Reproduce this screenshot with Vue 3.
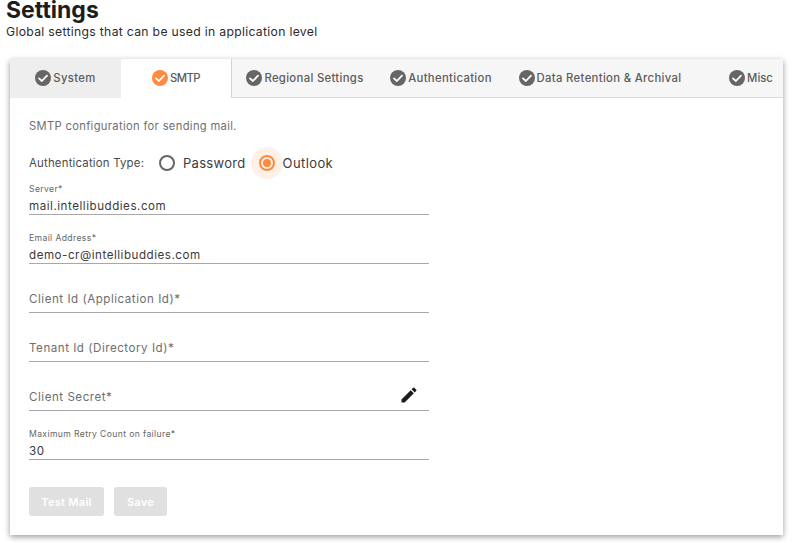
<script setup>
const tabs = [
  { label: 'System', cls: 't-system' },
  { label: 'SMTP', cls: 't-smtp', active: true },
  { label: 'Regional Settings', cls: 't-regional' },
  { label: 'Authentication', cls: 't-auth' },
  { label: 'Data Retention & Archival', cls: 't-data' },
  { label: 'Misc', cls: 't-misc' }
]
const fields = [
  { label: 'Server*', value: 'mail.intellibuddies.com' },
  { label: 'Email Address*', value: 'demo-cr@intellibuddies.com' },
  { label: 'Client Id (Application Id)*' },
  { label: 'Tenant Id (Directory Id)*' },
  { label: 'Client Secret*', edit: true },
  { label: 'Maximum Retry Count on failure*', value: '30' }
]
</script>

<template>
  <div class="page">
    <header class="head">
      <h1>Settings</h1>
      <p>Global settings that can be used in application level</p>
    </header>
    <section class="card">
      <nav class="tabs">
        <div v-for="t in tabs" :key="t.label" class="tab" :class="[t.cls, { active: t.active }]">
          <svg class="check" viewBox="0 0 16 16" width="16" height="16">
            <circle cx="8" cy="8" r="8" class="disc" />
            <path d="M4 8.4 L6.9 11 L12 5.6" fill="none" stroke="#fff" stroke-width="1.8" stroke-linecap="round" stroke-linejoin="round" />
          </svg>
          <span>{{ t.label }}</span>
        </div>
      </nav>
      <div class="body">
        <p class="intro">SMTP configuration for sending mail.</p>
        <div class="auth">
          <span class="auth-label">Authentication Type:</span>
          <label class="radio">
            <span class="ring"></span>
            <span>Password</span>
          </label>
          <label class="radio on">
            <span class="halo"><span class="ring"><span class="dot"></span></span></span>
            <span>Outlook</span>
          </label>
        </div>
        <div class="fields">
          <div v-for="f in fields" :key="f.label" class="field">
            <template v-if="f.value">
              <span class="small">{{ f.label }}</span>
              <span class="value">{{ f.value }}</span>
            </template>
            <div v-else class="empty">
              <span>{{ f.label }}</span>
              <svg v-if="f.edit" class="pen" viewBox="0 0 24 24" width="20" height="20">
                <path fill="#1c1c1c" d="M3 17.25V21h3.75L17.81 9.94l-3.75-3.75L3 17.25zM20.71 7.04a1 1 0 0 0 0-1.41l-2.34-2.34a1 1 0 0 0-1.41 0l-1.83 1.83 3.75 3.75 1.83-1.83z" />
              </svg>
            </div>
          </div>
        </div>
        <div class="actions">
          <button class="btn test" disabled>Test Mail</button>
          <button class="btn save" disabled>Save</button>
        </div>
      </div>
    </section>
  </div>
</template>

<style>
html, body { margin: 0; background: #fff; }
</style>

<style scoped>
.page {
  width: 792px;
  height: 543px;
  overflow: hidden;
  font-family: "Inter", "Open Sans", sans-serif;
  color: #212121;
}
.head { padding: 1px 0 0 6px; height: 59px; box-sizing: border-box; }
h1 {
  margin: 0;
  font-size: 23px;
  line-height: 18px;
  font-weight: 700;
  color: #1d1d1d;
}
.head p {
  margin: 5px 0 0;
  font-size: 12.2px;
  line-height: 16px;
  letter-spacing: .31px;
  color: #2b2b2b;
}
.card {
  margin-left: 10px;
  width: 773px;
  height: 476px;
  background: #fff;
  box-shadow: 0 2px 6px rgba(0, 0, 0, .4);
}
.tabs {
  display: flex;
  height: 38px;
  background: #f6f6f6;
  border-bottom: 1px solid #dcdcdc;
}
.tab {
  display: flex;
  align-items: center;
  justify-content: center;
  gap: 2px;
  box-sizing: border-box;
  padding-bottom: 1px;
  font-size: 11.3px;
  font-weight: 500;
  letter-spacing: .33px;
  color: #5c5c5c;
  height: 39px;
}
.check { flex: none; }
.disc { fill: #666; }
.t-system { width: 111px; background: #eeeeee; }
.t-smtp { width: 111px; background: #fff; border-right: 1px solid #d4d4d4; letter-spacing: -.5px; }
.t-regional { width: 146px; }
.t-auth { width: 126px; }
.t-data { width: 192px; }
.t-misc { width: 87px; padding-left: 23px; letter-spacing: 0; }
.active .disc { fill: #ff8a3d; }
.body { padding: 20px 0 0 19px; }
.intro {
  margin: 0;
  font-size: 11.2px;
  line-height: 16px;
  letter-spacing: .33px;
  color: #6f6f6f;
}
.auth {
  display: flex;
  align-items: center;
  height: 32px;
  margin-top: 13px;
  font-size: 11.4px;
  letter-spacing: .2px;
  color: #4a4a4a;
}
.auth-label { width: 130px; }
.radio {
  display: flex;
  align-items: center;
  gap: 8px;
  font-size: 13px;
  letter-spacing: .3px;
  color: #3c3c3c;
}
.radio.on { margin-left: 5px; gap: 0; letter-spacing: .4px; }
.ring {
  display: flex;
  align-items: center;
  justify-content: center;
  box-sizing: border-box;
  width: 16px;
  height: 16px;
  border: 2px solid #666;
  border-radius: 50%;
}
.halo {
  display: flex;
  align-items: center;
  justify-content: center;
  width: 32px;
  height: 32px;
  border-radius: 50%;
  background: #fff1e8;
}
.on .ring { border-color: #ff8a3d; }
.dot { width: 8px; height: 8px; border-radius: 50%; background: #ff8a3d; }
.fields { width: 400px; }
.field {
  display: flex;
  flex-direction: column;
  justify-content: flex-end;
  height: 49px;
  box-sizing: border-box;
  border-bottom: 1px solid #a8a8a8;
}
.field:first-child { height: 36px; }
.small {
  font-size: 8.6px;
  line-height: 11px;
  letter-spacing: .38px;
  color: #666;
}
.value {
  font-size: 11.6px;
  line-height: 16px;
  letter-spacing: .53px;
  padding: 3px 0 0;
  color: #3a3a3a;
}
.empty {
  display: flex;
  justify-content: space-between;
  align-items: center;
  padding-right: 10px;
  padding-bottom: 1px;
  box-sizing: border-box;
  height: 26px;
  font-size: 11.6px;
  letter-spacing: .52px;
  color: #6e6e6e;
}
.pen { margin-top: -3px; }
.actions { display: flex; gap: 10px; margin-top: 27px; }
.btn {
  height: 29px;
  border: 0;
  border-radius: 3px;
  background: #e0e0e0;
  color: #fff;
  font: 600 11px "Inter", sans-serif;
  letter-spacing: .3px;
  padding: 0;
}
.test { width: 75px; }
.save { width: 53px; }
</style>
